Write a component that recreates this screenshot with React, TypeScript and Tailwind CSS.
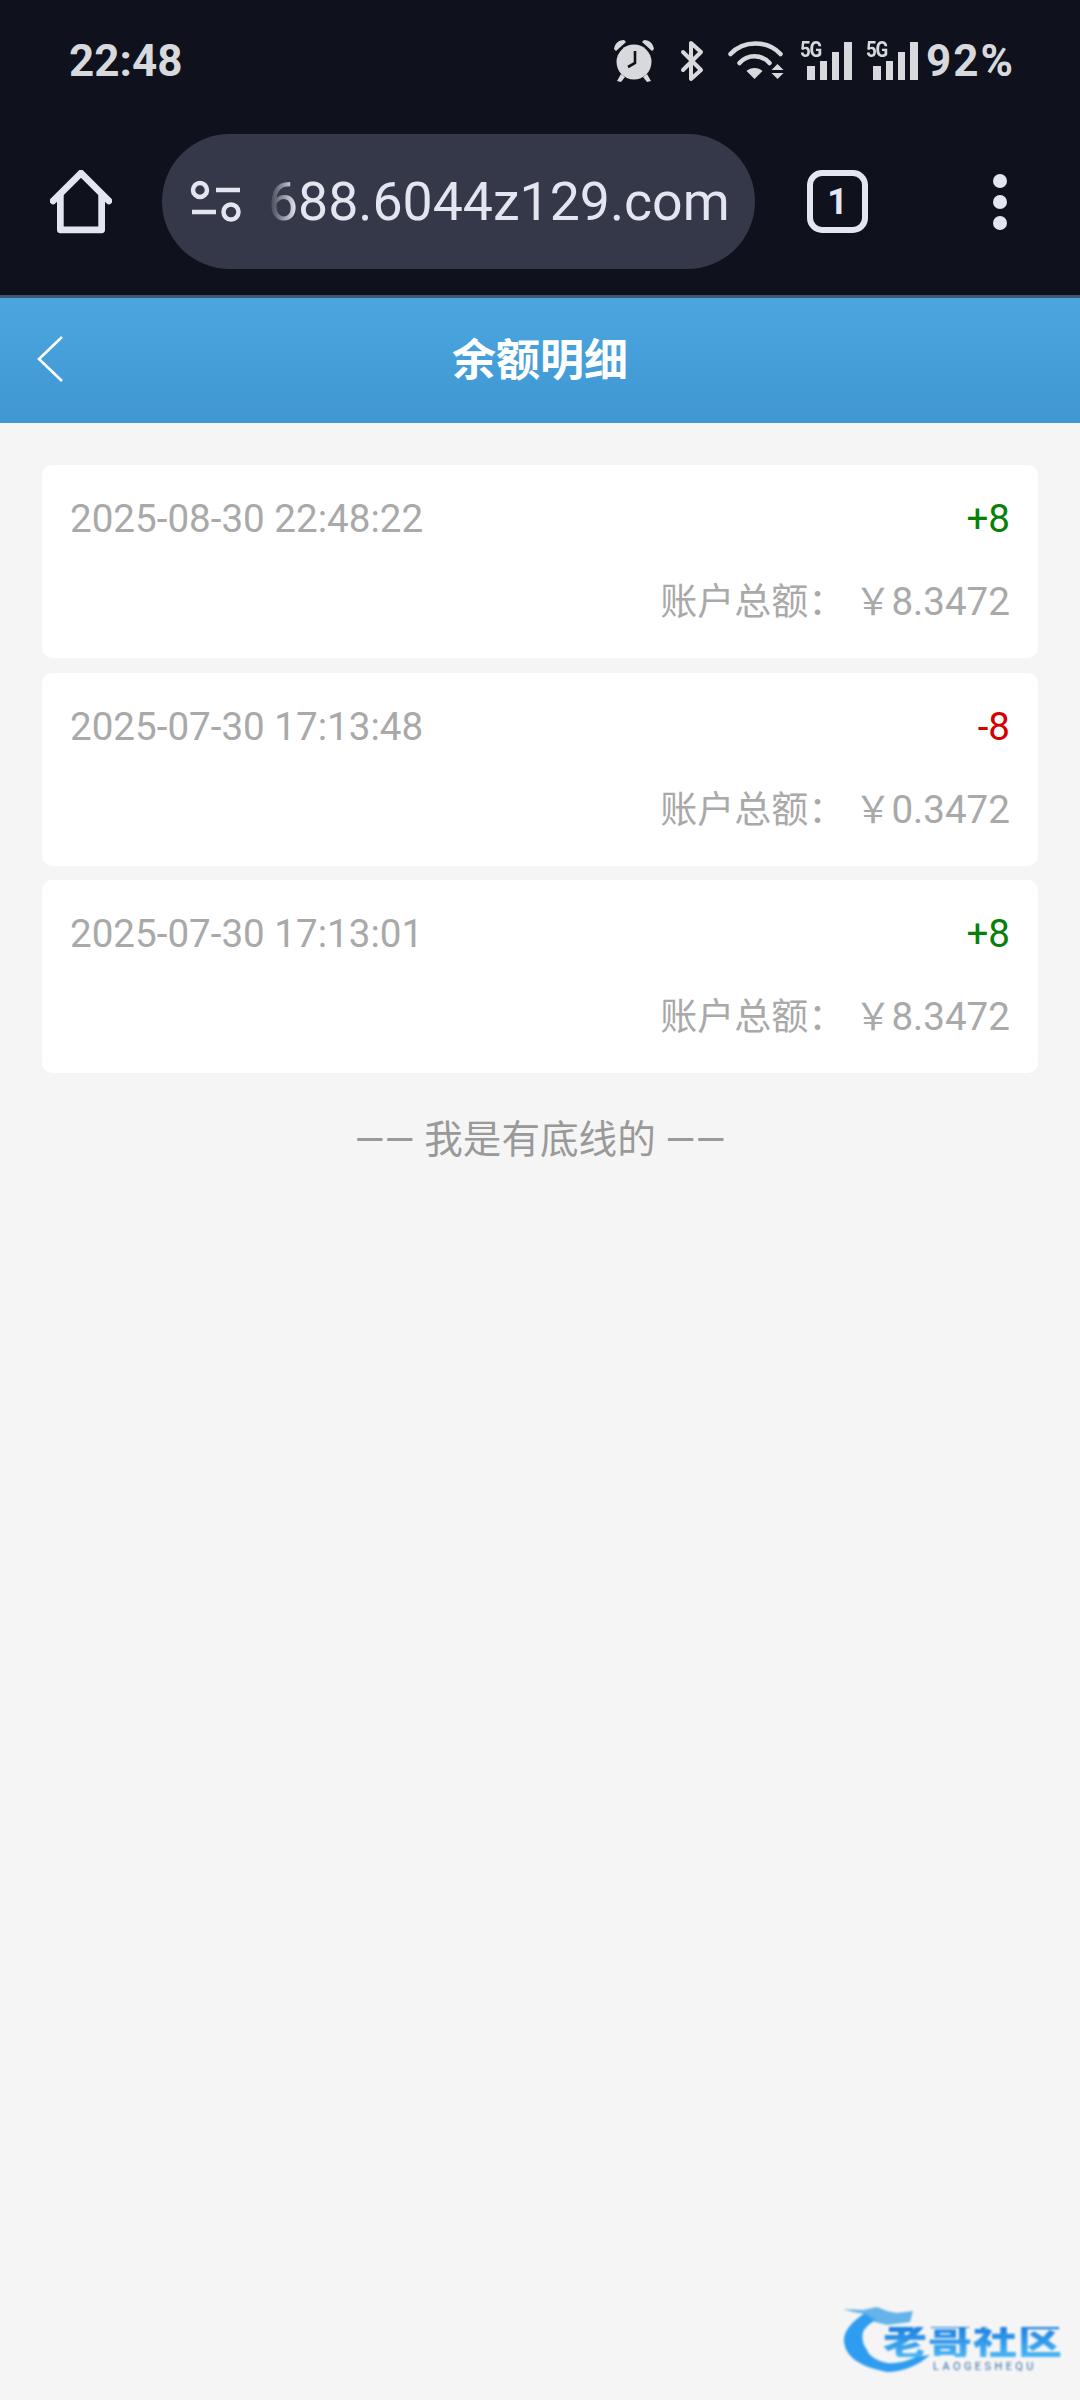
const sans = "font-['Roboto','Noto_Sans_CJK_SC',sans-serif]";

const records = [
  { time: "2025-08-30 22:48:22", change: "+8", balance: "8.3472" },
  { time: "2025-07-30 17:13:48", change: "-8", balance: "0.3472" },
  { time: "2025-07-30 17:13:01", change: "+8", balance: "8.3472" },
];

const AlarmIcon = () => (
  <svg width="42" height="44" viewBox="0 0 42 44" fill="#d8d9dc">
    <circle cx="21" cy="23" r="17.5" />
    <path d="M1 10 C2 4 6 1 11 1 L13 3 L3 12 Z M41 10 C40 4 36 1 31 1 L29 3 L39 12 Z" />
    <path d="M8 35 L4 42 L8 43 L12 38 Z M34 35 L38 42 L34 43 L30 38 Z" />
    <path d="M22 12 V24 L15 28" fill="none" stroke="#0f121c" strokeWidth="2.6" />
  </svg>
);

const BluetoothIcon = () => (
  <svg width="24" height="42" viewBox="0 0 24 42" fill="none" stroke="#d8d9dc" strokeWidth="4" strokeLinejoin="round" strokeLinecap="round">
    <path d="M3 12 L21 30 L11 39 V3 L21 12 L3 30" />
  </svg>
);

const WifiIcon = () => (
  <svg width="57" height="42" viewBox="0 0 56 42" fill="none" stroke="#d8d9dc" strokeWidth="4.5" strokeLinecap="round">
    <path d="M2 14 C15 0 39 0 52 14" />
    <path d="M11 23 C19 14 33 14 41 23" />
    <path d="M26 39 L18 31 C22 27 30 27 34 31 Z" fill="#d8d9dc" stroke="none" />
    <path d="M49 24 L55 30 H43 Z M43 33 H55 L49 39 Z" fill="#d8d9dc" stroke="none" />
  </svg>
);

const SignalIcon = () => (
  <div className="relative w-[52px] h-[38px]">
    <span className={`absolute left-0 top-[-4px] text-[22px] leading-[24px] font-bold text-[#d8d9dc] tracking-[-1.5px] scale-x-[0.85] origin-left ${sans}`}>5G</span>
    <div className="absolute inset-0 flex items-end justify-end gap-[5px]">
      <div className="w-[8px] h-[14px] bg-[#d8d9dc]" />
      <div className="w-[7px] h-[19px] bg-[#d8d9dc]" />
      <div className="w-[7px] h-[28px] bg-[#d8d9dc]" />
      <div className="w-[8px] h-[38px] bg-[#d8d9dc]" />
    </div>
  </div>
);

const HomeIcon = () => (
  <svg width="62" height="64" viewBox="0 0 60 62" fill="none" stroke="#e3e6f1" strokeWidth="6.5" strokeLinejoin="round" strokeLinecap="round">
    <path d="M3 30 L30 3 L57 30" />
    <path d="M10 25 V58 H50 V25" />
  </svg>
);

const TuneIcon = () => (
  <svg width="52" height="44" viewBox="0 0 52 44" fill="none" stroke="#e3e6f1" strokeWidth="4.5">
    <circle cx="10" cy="10" r="7" />
    <path d="M26 10 H50" />
    <path d="M2 32 H26" />
    <circle cx="41" cy="32" r="7.5" />
  </svg>
);

const DragonLogo = () => (
  <svg width="100" height="76" viewBox="0 0 100 76" className="absolute left-0 top-0" fill="none">
    <path d="M22 13 C8 22 0 32 1 42 C3 56 14 66 44 72 C60 72 76 65 87 55 L73 57 C62 62 52 64 44 63 C34 61 26 56 24 50 C18 42 19 33 21 30 C24 26 28 22 34 20 Z" fill="#2e9cf0" />
    <path d="M0 9 L20 10 L34 7 L44 11 L54 13 L70 11 L67 22 L52 24 L44 25 L32 22 L22 14 L10 12 Z" fill="#4aa8e8" opacity="0.85" />
  </svg>
);

export default function App() {
  return (
    <div className={`w-[1080px] h-[2400px] bg-[#f5f5f5] flex flex-col overflow-hidden ${sans}`}>
      <div className="bg-[#0f121c] h-[298px] shrink-0 flex flex-col border-b-[3px] border-[#3f5876]">
        <div className="h-[134px] shrink-0 flex items-start justify-between pl-[69px] pr-[65px] pt-[39px]">
          <span className="text-[44px] leading-[44px] font-bold text-[#d8d9dc]">22:48</span>
          <div className="flex items-center">
            <AlarmIcon />
            <div className="ml-[25px]"><BluetoothIcon /></div>
            <div className="ml-[24px]"><WifiIcon /></div>
            <div className="ml-[15px]"><SignalIcon /></div>
            <div className="ml-[14px]"><SignalIcon /></div>
            <span className="ml-[8px] text-[44px] leading-[44px] font-bold tracking-[2px] text-[#d8d9dc]">92%</span>
          </div>
        </div>
        <div className="h-[135px] shrink-0 flex items-center">
          <div className="w-[162px] flex justify-center"><HomeIcon /></div>
          <div className="w-[593px] h-[135px] rounded-full bg-[#343848] flex items-center pl-[28px]">
            <TuneIcon />
            <div className="ml-[26px] relative w-[480px] overflow-hidden">
              <span className="text-[53.6px] leading-[62px] text-[#e3e6f1] whitespace-nowrap">688.6044z129.com</span>
              <div className="absolute left-0 top-0 h-full w-[28px] bg-gradient-to-r from-[#343848] to-transparent" />
            </div>
          </div>
          <div className="ml-[52px] w-[61px] h-[63px] rounded-[15px] border-[6px] border-[#e3e6f1] flex items-center justify-center">
            <span className="text-[36px] leading-none font-bold text-[#e3e6f1]">1</span>
          </div>
          <div className="ml-[125px] flex flex-col gap-[7px]">
            <div className="w-[14px] h-[14px] rounded-full bg-[#e3e6f1]" />
            <div className="w-[14px] h-[14px] rounded-full bg-[#e3e6f1]" />
            <div className="w-[14px] h-[14px] rounded-full bg-[#e3e6f1]" />
          </div>
        </div>
      </div>

      <div className="h-[125px] shrink-0 bg-gradient-to-b from-[#4ba6e0] to-[#4097d1] flex items-center justify-center relative">
        <svg width="26" height="46" viewBox="0 0 26 46" fill="none" stroke="#fff" strokeWidth="2.6" className="absolute left-[37px] top-[38px]">
          <path d="M25 1 L2 23 L25 45" />
        </svg>
        <span className="text-[44px] font-bold text-white">余额明细</span>
      </div>

      <div className="px-[42px] pt-[42px] flex flex-col gap-[14.5px]">
        {records.map((r) => (
          <div key={r.time} className="h-[193px] bg-white rounded-[10px] px-[28px] pt-[32px]">
            <div className="flex justify-between items-center h-[44px]">
              <span className="text-[38.6px] leading-[44px] text-[#a9a9a9]">{r.time}</span>
              <span className={`text-[38.6px] leading-[44px] ${r.change === "+8" ? "text-[#078007]" : "text-[#d40000]"}`}>{r.change}</span>
            </div>
            <div className="mt-[39px] text-right text-[37px] leading-[44px] text-[#a9a9a9]">
              账户总额： ￥<span className="text-[38.6px]">{r.balance}</span>
            </div>
          </div>
        ))}
      </div>

      <div className="mt-[45px] text-center text-[38.6px] leading-[44px] text-[#999999]">—— 我是有底线的 ——</div>

      <div className="mt-auto self-end relative w-[220px] h-[75px] mr-[17px] mb-[25px] blur-[0.8px]">
        <DragonLogo />
        <div className="absolute left-[40px] top-[24px] text-[44px] leading-[36px] font-black tracking-[1px] whitespace-nowrap scale-y-[0.85] bg-gradient-to-b from-[#1c7fe0] to-[#4ab6f4] bg-clip-text text-transparent">老哥社区</div>
        <div className="absolute left-[90px] top-[61px] text-[11px] leading-[11px] text-[#3a6fa8] tracking-[3.4px] whitespace-nowrap">LAOGESHEQU</div>
      </div>
    </div>
  );
}
